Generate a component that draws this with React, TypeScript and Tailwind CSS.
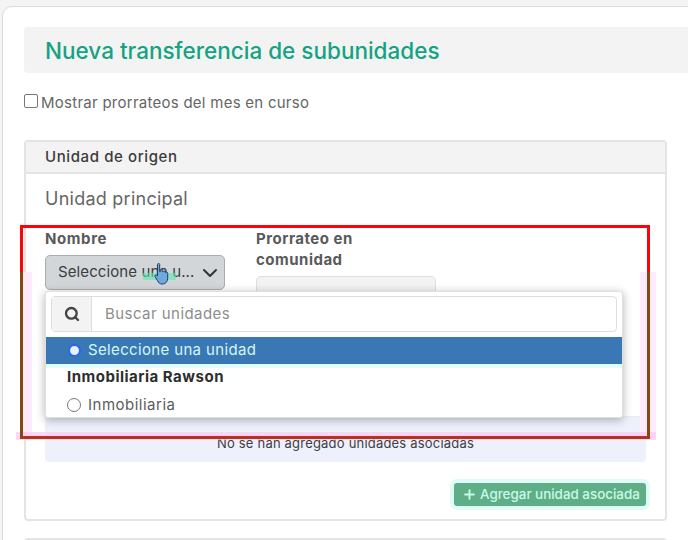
import { ChevronDown, Plus, Search } from "lucide-react";

function HandCursor() {
  return (
    <>
      <div className="pointer-events-none absolute left-[143px] top-[273px] h-[7px] w-[33px] bg-[#5fe8b0]/60" />
      <svg viewBox="0 0 20 24" className="absolute left-[152px] top-[262px] h-[24px] w-[20px]">
        <path
          d="M5.5 2.5c0-1.400 2.200-1.400 2.200 0v7.200l1-.3V8.300c0-1.200 2-1.200 2 0v1.500l1-.1c.2-1 2-.9 2 .3v.6c.4-.7 2-.5 2 .7v5c0 3-2 5.700-5 5.700H10c-2.300 0-3.500-1.400-4.500-3.300L3 14.500c-.6-1.300 1-2.200 2-1.200l.5.6V2.500z"
          fill="#6ea8dc"
          stroke="#1f3f66"
          strokeWidth="1"
          strokeLinejoin="round"
        />
      </svg>
    </>
  );
}

function Overlay() {
  return (
    <>
      {/* pink halos left by the screenshot */}
      <div className="pointer-events-none absolute left-[20px] top-[272px] h-[166px] w-[12px] bg-[#fdeafb]" />
      <div className="pointer-events-none absolute left-[640px] top-[272px] h-[166px] w-[16px] bg-[#fdeafb]" />
      <div className="pointer-events-none absolute left-[16px] top-[432px] h-[8px] w-[640px] bg-[#fdc9f3]/70" />
      {/* red frame */}
      <div className="pointer-events-none absolute left-[20px] top-[225px] h-[48px] w-[630px] border-x-[3px] border-t-[3px] border-[#fb0309]" />
      <div className="pointer-events-none absolute left-[20px] top-[272px] h-[167px] w-[630px] border-x-[3px] border-b-[3px] border-x-[#84490f] border-b-[#b5341c]" />
    </>
  );
}

function Dropdown() {
  return (
    <div className="absolute left-[45px] top-[291px] h-[127px] w-[578px] rounded-[3px] border border-[#e0e0e0] bg-white shadow-[0_2px_10px_rgba(0,0,0,0.3)]">
      <div className="px-[5px] pt-[4px]">
        <div className="flex h-[36px] rounded-[4px] border border-[#dedede]">
          <div className="flex w-[40px] items-center justify-center border-r border-[#dedede] bg-[#f3f3f3]">
            <Search className="h-[16px] w-[16px] text-[#444]" strokeWidth={3.5} />
          </div>
          <div className="flex items-center pl-[13px] text-[15px] tracking-[0.45px] text-[#8d8d8d]">Buscar unidades</div>
        </div>
      </div>
      <div className="mt-[5px] flex h-[27px] items-center bg-[#3a77b5] pl-[22px] text-[15px] tracking-[0.35px] text-[#d5f7fb] shadow-[0_4px_0_#e3fdfd]">
        <span className="mr-[7px] h-[13px] w-[13px] rounded-full border-2 border-[#2b66f0] bg-[#e8f2ff]" />
        Seleccione una unidad
      </div>
      <div className="flex h-[27px] items-center pl-[21px] text-[15px] font-bold tracking-[0.5px] text-[#2d2d2d]">Inmobiliaria Rawson</div>
      <div className="flex h-[27px] items-center pl-[21px] pt-[1px] text-[15px] tracking-[0.5px] text-[#5c5c5c]">
        <span className="mr-[7px] h-[14px] w-[14px] rounded-full border border-[#777] bg-white" />
        Inmobiliaria
      </div>
    </div>
  );
}

export default function App() {
  return (
    <div className="relative h-[540px] w-[688px] overflow-hidden bg-[#f4f4f4] pl-[2px] pt-[6px] font-['Inter','Noto_Sans',sans-serif]">
      <div className="h-[600px] w-[720px] rounded-tl-[10px] border border-[#dcdcdc] bg-white pl-[21px] pt-[20px]">
        <div className="flex h-[46px] items-center rounded-l-[4px] bg-[#f3f3f3] pl-[21px] pt-[1px] text-[22.500px] font-medium text-[#14a382]">
          Nueva transferencia de subunidades
        </div>

        <div className="mt-[21px] flex h-[18px] items-center text-[15px] tracking-[0.26px] text-[#666]">
          <span className="mr-[3px] mt-[-4px] h-[14px] w-[14px] rounded-[2px] border border-[#777] bg-white" />
          Mostrar prorrateos del mes en curso
        </div>

        <div className="mt-[28px] w-[643px] rounded-[4px] border-2 border-[#e4e4e4]">
          <div className="flex h-[32px] items-center border-b-2 border-[#e4e4e4] bg-[#f3f3f3] pl-[19px] text-[15px] font-medium tracking-[0.6px] text-[#3b3b3b]">
            Unidad de origen
          </div>
          <div className="px-[19px] pb-[13px] pt-[14px]">
            <div className="text-[18px] leading-[22px] tracking-[0.25px] text-[#666]">Unidad principal</div>

            <div className="mt-[18px] flex gap-[31px]">
              <div className="w-[180px]">
                <div className="h-[21px] text-[15px] font-bold leading-[21px] tracking-[0.6px] text-[#5a5a5a]">Nombre</div>
                <div className="mt-[6px] flex h-[35px] items-center justify-between rounded-[5px] border border-[#a8adb0] bg-[#d3d6d8] pl-[12px] pr-[2px] text-[15px] tracking-[0.1px] text-[#3a3d40]">
                  <span>Seleccione una u...</span>
                  <ChevronDown className="h-[24px] w-[24px] shrink-0 text-[#333]" strokeWidth={2} />
                </div>
              </div>
              <div className="w-[180px]">
                <div className="w-[130px] text-[15px] font-bold leading-[21px] tracking-[0.5px] text-[#5a5a5a]">Prorrateo en comunidad</div>
                <div className="mt-[6px] h-[36px] rounded-[5px] border border-[#dedede] bg-[#f3f3f3]" />
              </div>
            </div>

            <div className="mt-[104px] flex h-[46px] items-end justify-center rounded-[4px] border-t border-[#ececec] bg-[#eef1fc] pb-[9px] text-[13px] tracking-[0.2px] text-[#3d3d45]">
              No se han agregado unidades asociadas
            </div>

            <div className="mt-[21px] flex justify-end">
              <div className="flex h-[23px] w-[192px] items-center rounded-[3px] bg-[#5fae87] pl-[8px] text-[13.400px] font-medium text-[#c8fbe6] shadow-[0_0_0_4px_#dffcf8]">
                <Plus className="mr-[3px] h-[15px] w-[15px]" strokeWidth={3} />
                Agregar unidad asociada
              </div>
            </div>
          </div>
        </div>

        <div className="mt-[17px] h-[40px] w-[643px] rounded-t-[4px] border-2 border-[#e4e4e4]" />
      </div>

      <Dropdown />
      <Overlay />
      <HandCursor />
    </div>
  );
}
